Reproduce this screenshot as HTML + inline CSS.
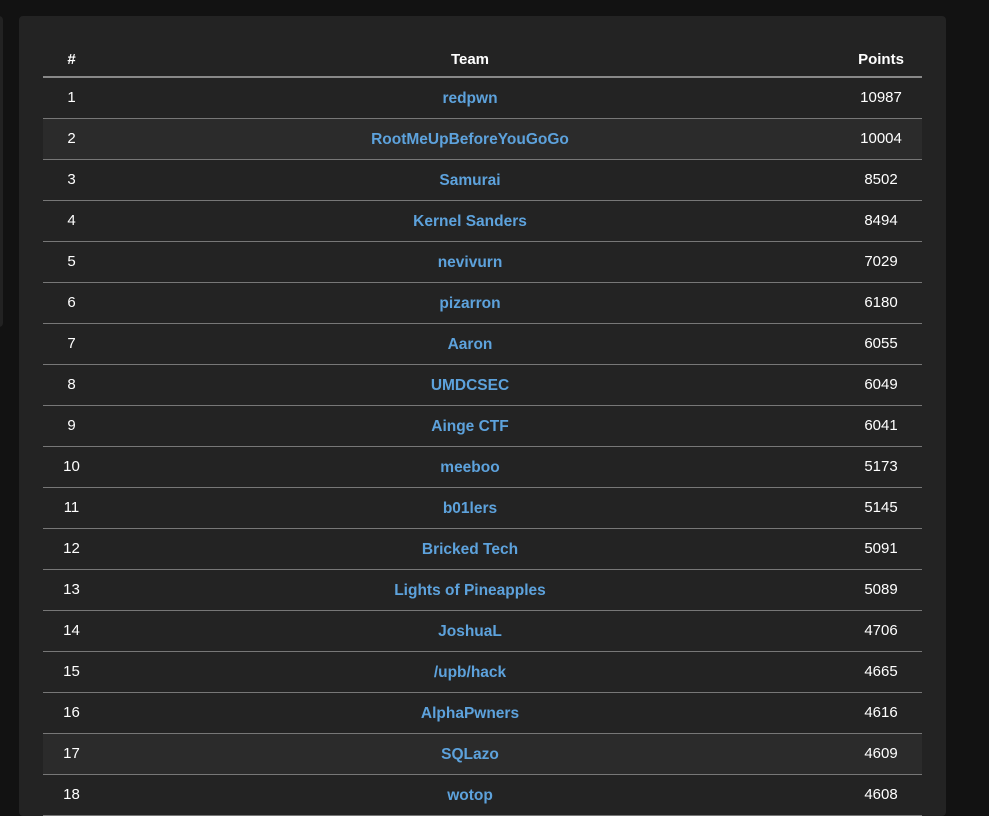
<!DOCTYPE html>
<html><head><style>
body{margin:0;width:989px;height:803px;background:#121212;overflow:hidden;font-family:"Liberation Sans",sans-serif;position:relative}
.side{position:absolute;left:-10px;top:16px;width:13px;height:311px;background:#222;border-radius:4px}
.card{position:absolute;left:19px;top:16px;width:927px;height:800px;background:#232323;border-radius:4px}
table{position:absolute;left:24px;top:29px;width:879px;border-collapse:collapse;color:#fff;font-size:15px;table-layout:fixed}
th{font-weight:bold;height:29px;padding:0 0 2px;border-bottom:2px solid #888;vertical-align:middle}
td{height:38px;border-bottom:1px solid #777;padding:0 0 2px;vertical-align:middle}
td:nth-child(2){color:#5da2dc;font-weight:bold;text-align:center;font-size:15.5px;padding:2px 0 0}
td:first-child,th:first-child{text-align:center;width:57px}
td:last-child,th:last-child{text-align:center;width:82px}
tr.a td{background:#2b2b2b}
</style></head><body>
<div class="side"></div>
<div class="card">
<table>
<tr><th>#</th><th>Team</th><th>Points</th></tr>
<tr><td>1</td><td>redpwn</td><td>10987</td></tr>
<tr class="a"><td>2</td><td>RootMeUpBeforeYouGoGo</td><td>10004</td></tr>
<tr><td>3</td><td>Samurai</td><td>8502</td></tr>
<tr><td>4</td><td>Kernel Sanders</td><td>8494</td></tr>
<tr><td>5</td><td>nevivurn</td><td>7029</td></tr>
<tr><td>6</td><td>pizarron</td><td>6180</td></tr>
<tr><td>7</td><td>Aaron</td><td>6055</td></tr>
<tr><td>8</td><td>UMDCSEC</td><td>6049</td></tr>
<tr><td>9</td><td>Ainge CTF</td><td>6041</td></tr>
<tr><td>10</td><td>meeboo</td><td>5173</td></tr>
<tr><td>11</td><td>b01lers</td><td>5145</td></tr>
<tr><td>12</td><td>Bricked Tech</td><td>5091</td></tr>
<tr><td>13</td><td>Lights of Pineapples</td><td>5089</td></tr>
<tr><td>14</td><td>JoshuaL</td><td>4706</td></tr>
<tr><td>15</td><td>/upb/hack</td><td>4665</td></tr>
<tr><td>16</td><td>AlphaPwners</td><td>4616</td></tr>
<tr class="a"><td>17</td><td>SQLazo</td><td>4609</td></tr>
<tr><td>18</td><td>wotop</td><td>4608</td></tr>
</table>
</div>
</body></html>
